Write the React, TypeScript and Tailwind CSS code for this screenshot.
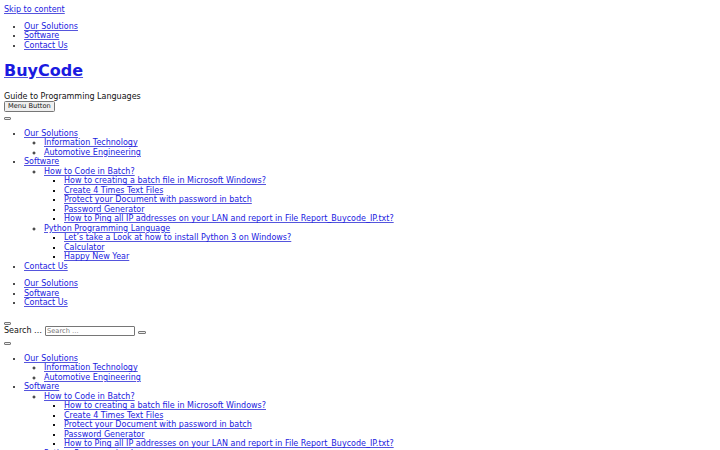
type Item = { label: string; children?: Item[] };

const menu: Item[] = [
  {
    label: "Our Solutions",
    children: [{ label: "Information Technology" }, { label: "Automotive Engineering" }],
  },
  {
    label: "Software",
    children: [
      {
        label: "How to Code in Batch?",
        children: [
          { label: "How to creating a batch file in Microsoft Windows?" },
          { label: "Create 4 Times Text Files" },
          { label: "Protect your Document with password in batch" },
          { label: "Password Generator" },
          { label: "How to Ping all IP addresses on your LAN and report in File Report_Buycode_IP.txt?" },
        ],
      },
      {
        label: "Python Programming Language",
        children: [
          { label: "Let’s take a Look at how to install Python 3 on Windows?" },
          { label: "Calculator" },
          { label: "Happy New Year" },
        ],
      },
    ],
  },
  { label: "Contact Us" },
];

const topMenu: Item[] = [{ label: "Our Solutions" }, { label: "Software" }, { label: "Contact Us" }];

const bullet = ["list-disc", "list-[circle]", "list-[square]"];

function Link({ children }: { children: React.ReactNode }) {
  return (
    <a href="#" className="text-[#1a1ae0] underline decoration-[#5555dd]">
      {children}
    </a>
  );
}

function Menu({ items, depth = 0 }: { items: Item[]; depth?: number }) {
  return (
    <ul className={`${bullet[Math.min(depth, 2)]} pl-[20px]`}>
      {items.map((item) => (
        <li key={item.label}>
          <Link>{item.label}</Link>
          {item.children && <Menu items={item.children} depth={depth + 1} />}
        </li>
      ))}
    </ul>
  );
}

function EmptyButton({ className = "" }: { className?: string }) {
  return (
    <button
      aria-label="toggle"
      className={`block w-[7px] h-[3px] rounded-[1px] border-[0.5px] border-[#767676] bg-[#efefef] ${className}`}
    />
  );
}

export default function App() {
  return (
    <div className="flex flex-col items-start px-[4px] pt-[4.5px] bg-white text-[#111] text-[8px] leading-[9.5px] font-['DejaVu_Sans',sans-serif]">
      <Link>Skip to content</Link>

      <div className="mt-[7.5px]">
        <Menu items={topMenu} />
      </div>

      <h1 className="mt-[11.7px] text-[16px] leading-[18.6px] font-bold">
        <Link>BuyCode</Link>
      </h1>

      <p className="mt-[11.7px]">Guide to Programming Languages</p>

      <button className="mt-0 h-[10.5px] px-[3px] rounded-[1.5px] border-[0.5px] border-[#767676] bg-[#efefef] text-[6.67px] leading-[9px]">
        Menu Button
      </button>

      <EmptyButton className="mt-[5.5px]" />

      <div className="mt-[8.25px]">
        <Menu items={menu} />
      </div>

      <div className="mt-[8.25px]">
        <Menu items={topMenu} />
      </div>

      <EmptyButton className="mt-[14.5px]" />

      <form className="mt-[1px] flex items-end h-[10px]">
        <label className="leading-[9.5px] mb-[0.5px]">Search …</label>
        <input
          type="search"
          placeholder="Search …"
          className="ml-[3px] w-[90px] h-[10px] px-[1px] border-[0.5px] border-[#767676] rounded-[1px] text-[6.67px] leading-[9px] placeholder:text-[#757575]"
        />
        <EmptyButton className="ml-[2.5px] mb-[2px] w-[8px]" />
      </form>

      <EmptyButton className="mt-[6px]" />

      <div className="mt-[8.5px]">
        <Menu items={menu} />
      </div>

      <div className="mt-[8.25px]">
        <Menu items={topMenu} />
      </div>
    </div>
  );
}
